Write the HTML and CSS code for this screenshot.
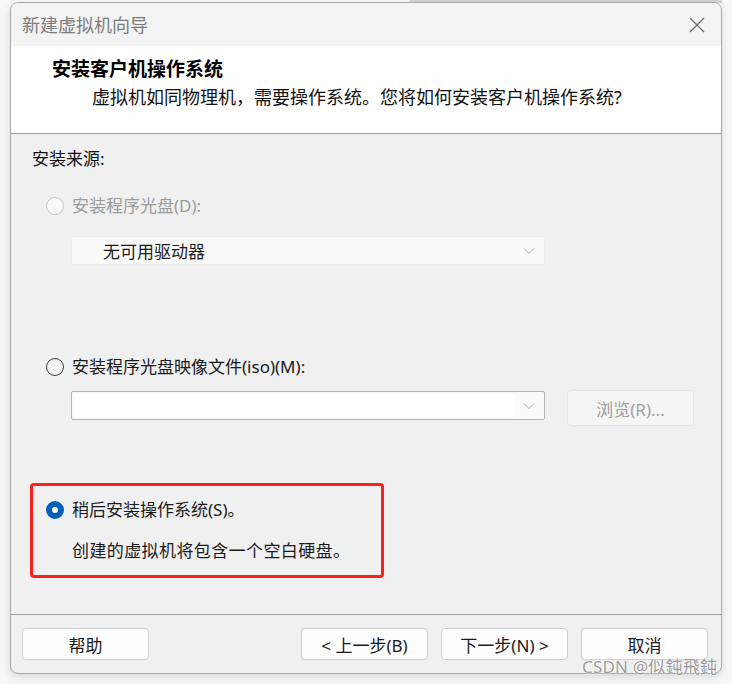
FILE: index.html
```html
<!DOCTYPE html>
<html lang="zh-CN">
<head>
<meta charset="UTF-8">
<meta name="viewport" content="width=device-width, initial-scale=1.0">
<title>新建虚拟机向导</title>
<link rel="stylesheet" href="styles.css">
</head>
<body>

<div class="backdrop"></div>

<div class="window">
  <div class="titlebar">
    <span class="title">新建虚拟机向导</span>
    <svg class="close" width="16" height="16" viewBox="0 0 16 16">
      <path d="M1 1 L15 15 M15 1 L1 15" stroke="#6e6e6e" stroke-width="1.3" fill="none"/>
    </svg>
  </div>

  <div class="header">
    <h2>安装客户机操作系统</h2>
    <p>虚拟机如同物理机，需要操作系统。您将如何安装客户机操作系统?</p>
  </div>

  <div class="content">
    <div class="section-label">安装来源:</div>

    <div class="radio-row disabled">
      <span class="radio"></span>
      <span>安装程序光盘(D):</span>
    </div>
    <div class="select disabled-select">
      <span>无可用驱动器</span>
      <svg class="chevron" width="12" height="8" viewBox="0 0 12 8"><path d="M1 1.5 L6 6.5 L11 1.5" stroke="#a8a8a8" fill="none"/></svg>
    </div>

    <div class="radio-row iso-row">
      <span class="radio"></span>
      <span>安装程序光盘映像文件(iso)(M):</span>
    </div>
    <div class="combo-row">
      <div class="select combo">
        <span class="combo-field"></span>
        <svg class="chevron" width="12" height="8" viewBox="0 0 12 8"><path d="M1 1.5 L6 6.5 L11 1.5" stroke="#a8a8a8" fill="none"/></svg>
      </div>
      <button class="btn btn-disabled">浏览(R)...</button>
    </div>

    <div class="highlight">
      <div class="radio-row">
        <span class="radio checked"></span>
        <span>稍后安装操作系统(S)。</span>
      </div>
      <div class="desc">创建的虚拟机将包含一个空白硬盘。</div>
    </div>
  </div>

  <div class="footer">
    <button class="btn">帮助</button>
    <div class="spacer"></div>
    <button class="btn">&lt; 上一步(B)</button>
    <button class="btn">下一步(N) &gt;</button>
    <button class="btn">取消</button>
  </div>
</div>

<div class="watermark">CSDN @似鈍飛鈍</div>

</body>
</html>
```

FILE: styles.css
```css
html, body {
  margin: 0;
  padding: 0;
}
body {
  font-family: "Noto Sans", "Noto Sans CJK SC", sans-serif;
  background-color: #f7f7f7;
  width: 732px;
  height: 684px;
  overflow: hidden;
  padding: 2px 10px 0;
  box-sizing: border-box;
  color: #1a1a1a;
}
.backdrop {
  position: absolute;
  top: 0;
  left: 410px;
  width: 312px;
  height: 3px;
  background-color: #d4d4d4;
}
.window {
  position: relative;
  width: 712px;
  height: 672px;
  box-sizing: border-box;
  border: 1px solid #a9a9a9;
  border-radius: 8px;
  background-color: #f0f0f0;
  overflow: hidden;
  display: flex;
  flex-direction: column;
  box-shadow: 0 3px 8px rgba(0, 0, 0, 0.12);
}
.titlebar {
  height: 43px;
  flex: none;
  display: flex;
  align-items: center;
  justify-content: space-between;
  padding: 0 16px 0 11px;
  background-color: #f3f3f3;
}
.title {
  font-size: 18px;
  color: #7c7c7c;
  line-height: 24px;
}
.close {
  display: block;
}
.header {
  height: 88px;
  flex: none;
  box-sizing: border-box;
  background-color: #fff;
  border-bottom: 1px solid #a0a0a0;
  padding: 11px 0 0 41px;
}
.header h2 {
  margin: 0;
  font-size: 19px;
  line-height: 24px;
  font-weight: bold;
  color: #000;
}
.header p {
  margin: 4px 0 0 40px;
  font-size: 18px;
  line-height: 24px;
  color: #111;
}
.content {
  flex: 1;
  padding: 13px 0 0 21px;
  font-size: 17px;
}
.section-label {
  line-height: 24px;
  color: #111;
}
.radio-row {
  display: flex;
  align-items: center;
  gap: 8px;
  line-height: 24px;
  margin-top: 23px;
  margin-left: 14px;
}
.radio {
  width: 16px;
  height: 16px;
  border: 1px solid #3c3c3c;
  border-radius: 50%;
  background-color: #f6f6f6;
  flex: none;
  box-sizing: content-box;
}
.disabled {
  color: #9b9b9b;
}
.disabled .radio {
  border-color: #c6c6c6;
  background-color: #f9f9f9;
}
.radio.checked {
  width: 6px;
  height: 6px;
  border: 6px solid #005fb8;
  background-color: #fff;
}
.select {
  display: flex;
  align-items: center;
  justify-content: space-between;
  box-sizing: border-box;
  width: 474px;
  height: 29px;
  margin: 18px 0 0 39px;
  padding: 0 9px 0 31px;
  background-color: #fafafa;
  border: 1px solid #ececec;
  border-radius: 2px;
}
.disabled-select span {
  color: #1a1a1a;
}
.iso-row {
  margin-top: 90px;
}
.combo-row {
  display: flex;
  align-items: flex-start;
  gap: 22px;
  margin: 11px 0 0 39px;
}
.combo {
  margin: 1px 0 0;
  padding: 0 9px 0 3px;
  border-color: #b4b4b4;
  background-color: #fafafa;
}
.combo-field {
  display: block;
  width: 440px;
  height: 23px;
  background-color: #fff;
}
.btn {
  width: 127px;
  height: 32px;
  box-sizing: border-box;
  border: 1px solid #d0d0d0;
  border-radius: 4px;
  background-color: #fdfdfd;
  font-family: "Noto Sans", "Noto Sans CJK SC", sans-serif;
  font-size: 17px;
  color: #1a1a1a;
  padding: 0;
  cursor: pointer;
}
.btn-disabled {
  height: 36px;
  color: #a0a0a0;
  background-color: #f5f5f5;
  border-color: #e6e6e6;
}
.highlight {
  width: 354px;
  height: 95px;
  box-sizing: border-box;
  margin: 57px 0 0 -2px;
  border: 3px solid #fa2020;
  border-radius: 4px;
  padding: 12px 0 0 13px;
}
.highlight .radio-row {
  margin: 0;
}
.desc {
  line-height: 24px;
  margin: 17px 0 0 26px;
  letter-spacing: 0.4px;
}
.footer {
  height: 59px;
  flex: none;
  box-sizing: border-box;
  border-top: 1px solid #a0a0a0;
  display: flex;
  align-items: flex-start;
  gap: 13px;
  padding: 13px 13px 0 11px;
}
.spacer {
  flex: 1;
}
.watermark {
  position: absolute;
  left: 582px;
  top: 658px;
  font-size: 17px;
  line-height: 18px;
  color: rgba(120, 120, 120, 0.75);
  text-shadow: 0 0 2px #fff, 0 0 1px #fff;
  letter-spacing: 0.2px;
}
```
